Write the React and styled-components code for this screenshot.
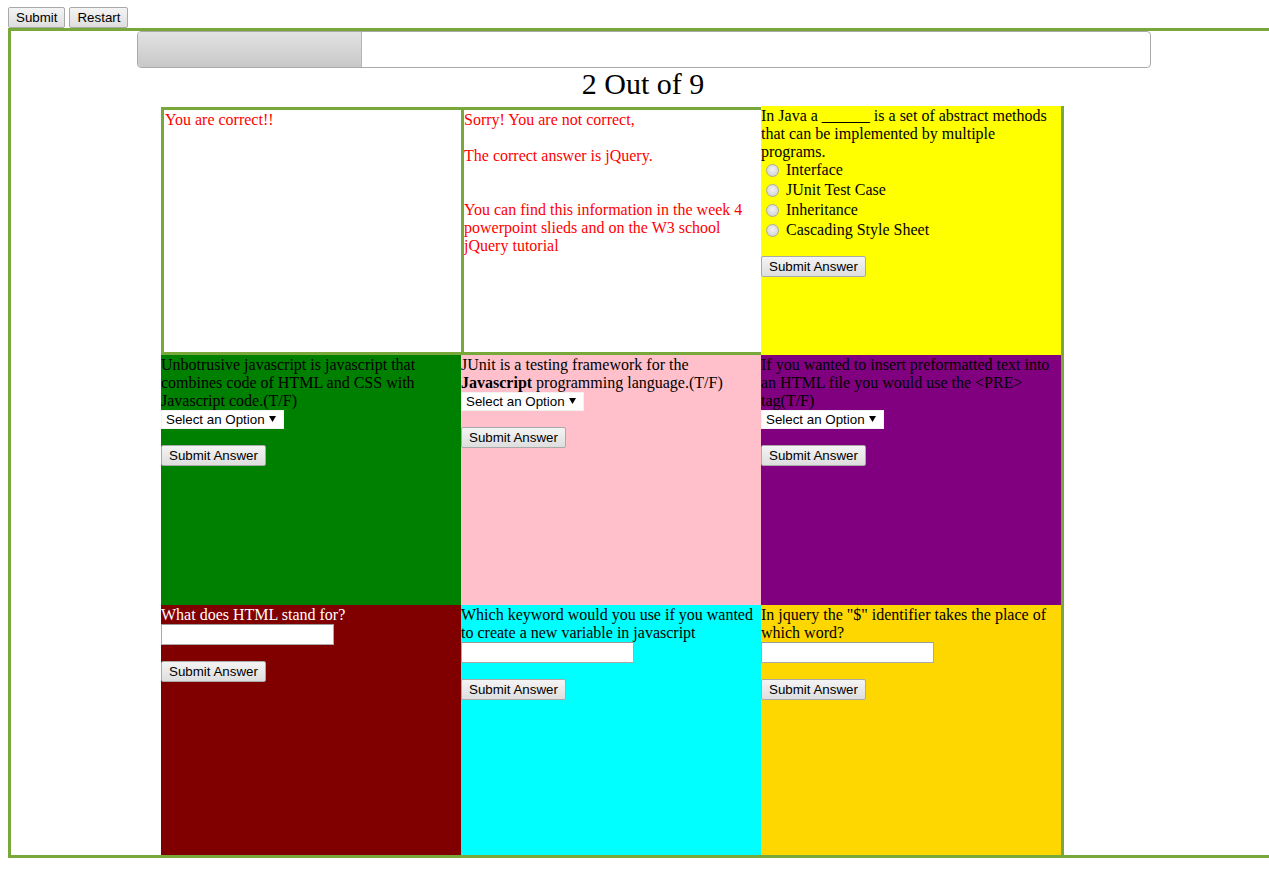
import React from "react";
import styled, { createGlobalStyle } from "styled-components";

const GREEN = "#78a83a";

const GlobalStyle = createGlobalStyle`
  body {
    margin: 0;
    font-family: "Liberation Serif", "Times New Roman", serif;
    background: #fff;
    overflow: hidden;
  }
`;

const Page = styled.div`
  padding: 7px 0 0 8px;
`;

const Toolbar = styled.div`
  display: flex;
  gap: 4px;
  height: 21px;
`;

const NativeButton = styled.button`
  box-sizing: border-box;
  height: 21px;
  padding: 0 7px;
  margin: 0;
  border: 1px solid #a9a9a9;
  border-radius: 2px;
  background: linear-gradient(#f4f4f4, #dedede);
  font-family: "Liberation Sans", Arial, sans-serif;
  font-size: 13.33px;
  color: #000;
  line-height: 19px;
  white-space: nowrap;
`;

const AnswerButton = styled(NativeButton)`
  display: block;
  margin-top: 16px;
`;

const Quiz = styled.div`
  width: 1268px;
  border: 3px solid ${GREEN};
`;

const ProgressTrack = styled.div`
  box-sizing: border-box;
  width: 1014px;
  height: 37px;
  margin-left: 126px;
  border: 1px solid #aaa;
  border-radius: 4px;
  overflow: hidden;
  display: flex;
`;

const ProgressFill = styled.div`
  height: 100%;
  background: linear-gradient(#e2e2e2, #c8c8c8);
  border-right: 1px solid #b4b4b4;
`;

const Score = styled.div`
  height: 38px;
  line-height: 32px;
  padding-right: 4px;
  text-align: center;
  font-size: 30px;
`;

const Board = styled.div`
  margin-left: 150px;
  width: 900px;
  border-right: 3px solid ${GREEN};
  display: grid;
  grid-template-columns: repeat(3, 300px);
  grid-template-rows: 249px 250px 250px;
`;

const Cell = styled.div`
  box-sizing: border-box;
  background: ${(p) => p.$bg || "#fff"};
  color: ${(p) => p.$fg || "#000"};
  font-size: 16px;
  line-height: 18px;
  overflow: hidden;
  ${(p) =>
    p.$answered &&
    `
    margin-top: 1px;
    border: 3px solid ${GREEN};
    border-right: none;
    color: #ff0000;
  `}
`;

const Feedback = styled.div`
  padding-top: 1px;
  padding-left: ${(p) => (p.$indent ? "1px" : "0")};
`;

const Question = styled.div`
  padding-top: 1px;
`;

const Options = styled.div`
  margin-top: -1px;
`;

const Option = styled.label`
  display: flex;
  align-items: center;
  height: 20px;
`;

const Radio = styled.input.attrs({ type: "radio" })`
  appearance: none;
  box-sizing: border-box;
  width: 13px;
  height: 13px;
  margin: 0 7px 0 5px;
  border-radius: 50%;
  border: 1px solid #a8a8a8;
  background: radial-gradient(circle at 50% 40%, #f2f2f2, #cdcdcd);
`;

const SelectWrap = styled.div`
  position: relative;
  width: 123px;
  height: 19px;
`;

const Select = styled.select`
  appearance: none;
  box-sizing: border-box;
  width: 123px;
  height: 19px;
  margin: 0;
  padding: 0 0 0 4px;
  border: 1px solid #f2f2f2;
  border-radius: 0;
  background: #fff;
  color: #000;
  font-family: "Liberation Sans", Arial, sans-serif;
  font-size: 13.33px;
`;

const Caret = styled.span`
  position: absolute;
  right: 8px;
  top: 6px;
  pointer-events: none;
  display: flex;
`;

const TextInput = styled.input.attrs({ type: "text" })`
  display: block;
  box-sizing: border-box;
  width: 173px;
  height: 21px;
  margin: 0;
  border: 1px solid #a9a9a9;
  border-top-color: #9a9a9a;
  background: #fff;
`;

const TFSelect = () => (
  <SelectWrap>
    <Select defaultValue="">
      <option value="">Select an Option</option>
      <option>True</option>
      <option>False</option>
    </Select>
    <Caret>
      <svg width="7" height="6" viewBox="0 0 7 6">
        <path d="M0 0 H7 L3.5 6 Z" fill="#000" />
      </svg>
    </Caret>
  </SelectWrap>
);

const radios = ["Interface", "JUnit Test Case", "Inheritance", "Cascading Style Sheet"];

export default function App() {
  const current = 2;
  const total = 9;
  const progress = Math.floor((current / total) * 100);
  return (
    <Page>
      <GlobalStyle />
      <Toolbar>
        <NativeButton>Submit</NativeButton>
        <NativeButton>Restart</NativeButton>
      </Toolbar>
      <Quiz>
        <ProgressTrack>
          <ProgressFill style={{ width: `${progress}%` }} />
        </ProgressTrack>
        <Score>
          {current} Out of {total}
        </Score>
        <Board>
          <Cell $answered>
            <Feedback $indent>You are correct!!</Feedback>
          </Cell>
          <Cell $answered>
            <Feedback>
              Sorry! You are not correct,
              <br />
              <br />
              The correct answer is jQuery.
              <br />
              <br />
              <br />
              You can find this information in the week 4 powerpoint slieds and on the W3 school jQuery
              tutorial
            </Feedback>
          </Cell>
          <Cell $bg="#ffff00">
            <Question>In Java a ______ is a set of abstract methods that can be implemented by multiple programs.</Question>
            <Options>
              {radios.map((r) => (
                <Option key={r}>
                  <Radio name="q3" />
                  {r}
                </Option>
              ))}
            </Options>
            <AnswerButton>Submit Answer</AnswerButton>
          </Cell>

          <Cell $bg="#008000">
            <Question>Unbotrusive javascript is javascript that combines code of HTML and CSS with Javascript code.(T/F)</Question>
            <TFSelect />
            <AnswerButton>Submit Answer</AnswerButton>
          </Cell>
          <Cell $bg="#ffc0cb">
            <Question>
              JUnit is a testing framework for the <b>Javascript</b> programming language.(T/F)
            </Question>
            <TFSelect />
            <AnswerButton>Submit Answer</AnswerButton>
          </Cell>
          <Cell $bg="#800080">
            <Question>If you wanted to insert preformatted text into an HTML file you would use the &lt;PRE&gt; tag(T/F)</Question>
            <TFSelect />
            <AnswerButton>Submit Answer</AnswerButton>
          </Cell>

          <Cell $bg="#800000" $fg="#fff">
            <Question>What does HTML stand for?</Question>
            <TextInput />
            <AnswerButton>Submit Answer</AnswerButton>
          </Cell>
          <Cell $bg="#00ffff">
            <Question>Which keyword would you use if you wanted to create a new variable in javascript</Question>
            <TextInput />
            <AnswerButton>Submit Answer</AnswerButton>
          </Cell>
          <Cell $bg="#ffd700">
            <Question>In jquery the "$" identifier takes the place of which word?</Question>
            <TextInput />
            <AnswerButton>Submit Answer</AnswerButton>
          </Cell>
        </Board>
      </Quiz>
    </Page>
  );
}
